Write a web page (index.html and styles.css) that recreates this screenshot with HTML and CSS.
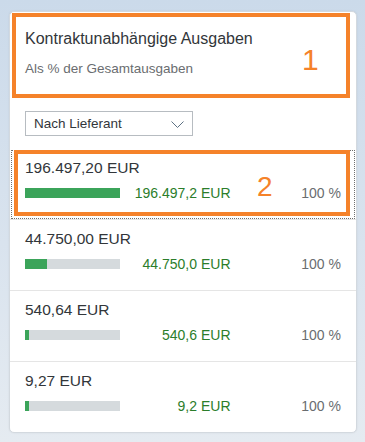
FILE: index.html
```html
<!DOCTYPE html>
<html lang="de">
<head>
<meta charset="utf-8">
<title>Kontraktunabhängige Ausgaben</title>
<link rel="stylesheet" href="styles.css">
</head>
<body>
<div class="card">
  <div class="header">
    <div class="title">Kontraktunabhängige Ausgaben</div>
    <div class="subtitle">Als % der Gesamtausgaben</div>
  </div>
  <div class="filter">
    <div class="select">
      <span>Nach Lieferant</span>
      <svg width="13" height="7" viewBox="0 0 13 7"><polyline points="0.5,0.5 6.5,6.5 12.5,0.5" fill="none" stroke="#5d7183" stroke-width="1"/></svg>
    </div>
  </div>
  <ul class="list">
    <li class="row focused">
      <div class="amount">196.497,20 EUR</div>
      <div class="line">
        <div class="bar"><div class="fill" style="width:100%"></div></div>
        <div class="value">196.497,2 EUR</div>
        <div class="pct">100 %</div>
      </div>
    </li>
    <li class="row">
      <div class="amount">44.750,00 EUR</div>
      <div class="line">
        <div class="bar"><div class="fill" style="width:22.8%"></div></div>
        <div class="value">44.750,0 EUR</div>
        <div class="pct">100 %</div>
      </div>
    </li>
    <li class="row">
      <div class="amount">540,64 EUR</div>
      <div class="line">
        <div class="bar"><div class="fill" style="width:4%"></div></div>
        <div class="value">540,6 EUR</div>
        <div class="pct">100 %</div>
      </div>
    </li>
    <li class="row">
      <div class="amount">9,27 EUR</div>
      <div class="line">
        <div class="bar"><div class="fill" style="width:4%"></div></div>
        <div class="value">9,2 EUR</div>
        <div class="pct">100 %</div>
      </div>
    </li>
  </ul>
  <div class="mark mark-1"></div>
  <div class="num num-1">1</div>
  <div class="mark mark-2"></div>
  <div class="num num-2">2</div>
</div>
</body>
</html>
```
FILE: styles.css
```css
html, body {
  margin: 0;
  padding: 0;
}
body {
  width: 365px;
  height: 442px;
  overflow: hidden;
  background: linear-gradient(180deg, #cbdaea 0%, #d9e3ee 55%, #e5ebf1 100%);
  font-family: "Liberation Sans", Arial, sans-serif;
  color: #32363a;
}
.card {
  position: relative;
  margin: 11px 0 0 9px;
  width: 348px;
  box-sizing: border-box;
  background: #fff;
  border: 1px solid #d3d9df;
  border-radius: 5px;
  box-shadow: 0 0 2px rgba(0, 0, 0, 0.08);
}
.header {
  padding: 17px 15px 20px;
}
.title {
  font-size: 16px;
  line-height: 20px;
  color: #32363a;
}
.subtitle {
  margin-top: 11px;
  font-size: 13.5px;
  line-height: 18px;
  color: #6a6d70;
}
.filter {
  padding: 13px 15px 13px;
}
.select {
  width: 168px;
  height: 25px;
  box-sizing: border-box;
  border: 1px solid #b7bcc1;
  display: flex;
  align-items: center;
  justify-content: space-between;
  padding: 0 8px 0 8px;
  font-size: 13.5px;
  color: #32363a;
}
.select svg {
  display: block;
  margin-top: 1px;
}
.list {
  list-style: none;
  margin: 0;
  padding: 0;
}
.row {
  height: 70px;
  box-sizing: content-box;
  padding: 9px 15px 0;
  box-sizing: border-box;
  border-bottom: 1px solid #e5e5e5;
  height: 71px;
}
.row:last-child {
  border-bottom: none;
  height: 70px;
}
.row.focused {
  outline: 1px dotted #6f6f6f;
  outline-offset: -2px;
}
.amount {
  font-size: 15.5px;
  line-height: 20px;
  color: #32363a;
}
.line {
  margin-top: 6px;
  display: grid;
  grid-template-columns: 95px 1fr 1fr;
  align-items: center;
  height: 18px;
  font-size: 14px;
  line-height: 18px;
}
.bar {
  height: 10px;
  background: #d5dadd;
}
.fill {
  height: 100%;
  background: #3ba45a;
}
.value {
  text-align: right;
  color: #2b7d2b;
}
.pct {
  text-align: right;
  color: #6a6d70;
}
.mark {
  position: absolute;
  box-sizing: border-box;
  border: 4px solid #f5822a;
  pointer-events: none;
}
.mark-1 {
  left: 2px;
  top: 1px;
  width: 338px;
  height: 85px;
}
.mark-2 {
  left: 4px;
  top: 138px;
  width: 336px;
  height: 66px;
}
.num {
  position: absolute;
  color: #f5822a;
  font-family: "Liberation Sans", Arial, sans-serif;
}
.num-1 {
  left: 292px;
  top: 33px;
  font-size: 30px;
  line-height: 30px;
}
.num-2 {
  left: 247px;
  top: 161px;
  font-size: 28px;
  line-height: 28px;
}
```
